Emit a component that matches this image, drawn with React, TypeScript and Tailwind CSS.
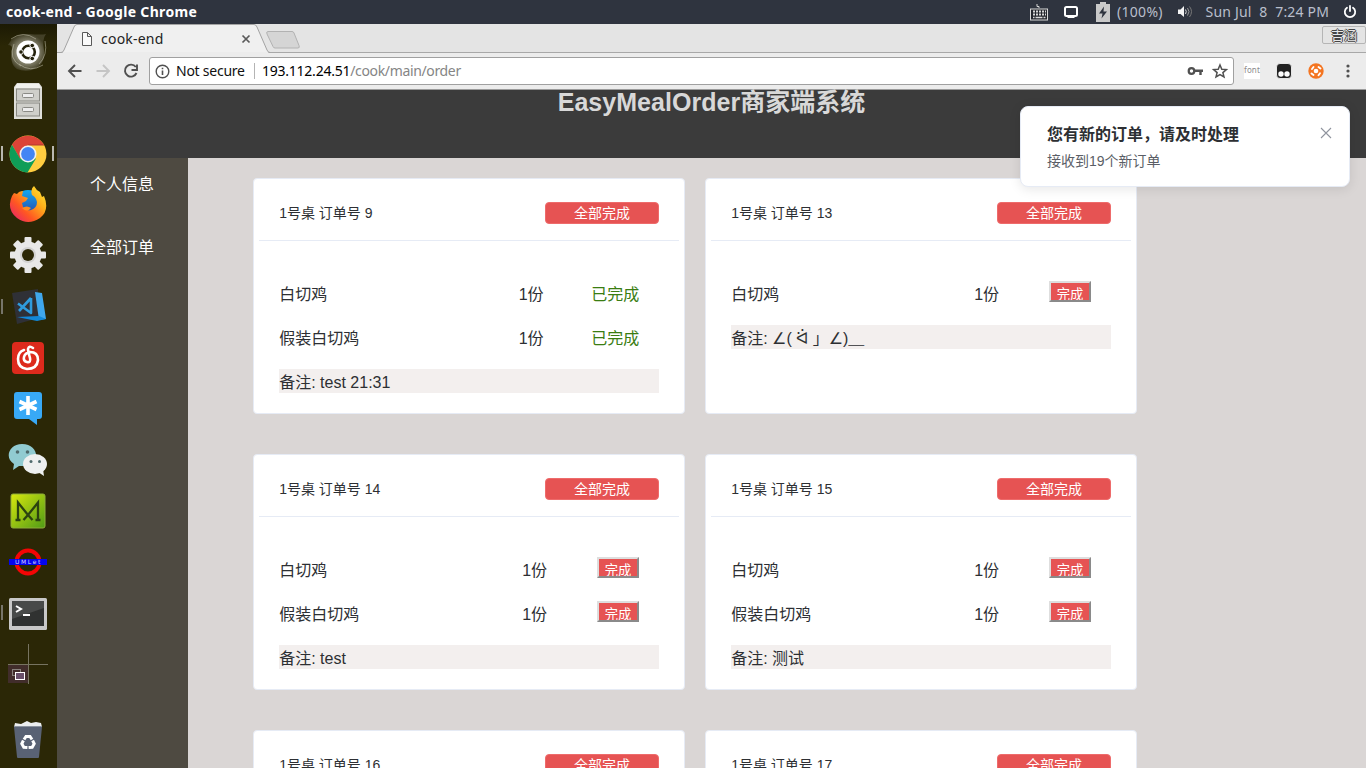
import React from "react";

type Item = { name: string; done?: boolean };
type Order = { no: number; items: Item[]; memo: React.ReactNode };

const two: Item[] = [{ name: "白切鸡" }, { name: "假装白切鸡" }];
const angle = <span className="font-['DejaVu_Sans']">∠</span>;
const orders: Order[] = [
  { no: 9, items: [{ name: "白切鸡", done: true }, { name: "假装白切鸡", done: true }], memo: "test 21:31" },
  { no: 13, items: [{ name: "白切鸡" }], memo: <>{angle}( ᐛ 」{angle})＿</> },
  { no: 14, items: two, memo: "test" },
  { no: 15, items: two, memo: "测试" },
  { no: 16, items: two, memo: "test" },
  { no: 17, items: two, memo: "test" },
];

function OrderCard({ order }: { order: Order }) {
  return (
    <div className="flex h-[236px] w-[432px] shrink-0 flex-col rounded-[4px] border border-[#e6ebf5] bg-white px-[5px] text-[#2d2f33]">
      <div className="flex h-[62px] shrink-0 items-start justify-between border-b border-[#e6ebf5] px-[20px] pt-[23px]">
        <span className="pl-[0.2px] text-[14px] leading-[22px]">1号桌 订单号 {order.no}</span>
        <button className="h-[22px] w-[114px] rounded-[4px] border border-[#ee6b6b] bg-[#e65353] text-center text-[14px] leading-[20px] text-white">
          全部完成
        </button>
      </div>
      <div className="flex flex-col gap-[20px] px-[20px] pt-[40px]">
        {order.items.map((it) => (
          <div key={it.name} className="flex h-[24px] items-start pl-[0.2px] text-[16px] leading-[28px]">
            <span className={it.done ? "w-[239.500px]" : "w-[243px]"}>{it.name}</span>
            <span className={it.done ? "w-[72.500px]" : "w-[74.800px]"}>1份</span>
            {it.done ? (
              <span className="text-[#3a7d12]">已完成</span>
            ) : (
              <button className="h-[21px] w-[42px] overflow-hidden border-2 border-t-[#dedede] border-r-[#8a8a8a] border-b-[#8a8a8a] border-l-[#dedede] bg-[#e65353] text-center text-[13.33px] leading-[23px] text-white">
                完成
              </button>
            )}
          </div>
        ))}
        <div className="h-[24px] bg-[#f3efee] pl-[0.2px] text-[16px] leading-[28px]">备注: {order.memo}</div>
      </div>
    </div>
  );
}

function SystemBar() {
  return (
    <div className="flex h-[24px] shrink-0 items-center justify-between bg-[#2f343f] font-['Noto_Sans']">
      <span className="pl-[6px] text-[14px] leading-[20px] font-bold tracking-[0.32px] text-white">cook-end - Google Chrome</span>
      <div className="flex items-center pr-[9px] text-[14px] leading-[20px] text-[#b9bfcc]">
        <svg width="20" height="20" viewBox="0 0 20 20" className="mr-[15px]" fill="none" stroke="#d8d8d8">
          <path d="M10 6V4.500H8V2" />
          <rect x="1.500" y="7" width="17" height="11" fill="#24262c" />
          <path d="M4 9.500h13M4 12.500h13" strokeWidth="2" strokeDasharray="2 1" />
          <path d="M4 15.500h1.500M6.500 15.500h7M14.500 15.500h2" strokeWidth="1.500" />
        </svg>
        <svg width="14" height="14" viewBox="0 0 14 14" className="mr-[18px]" fill="none" stroke="#fff" strokeWidth="2">
          <rect x="1" y="2" width="12" height="9" rx="1.500" />
          <path d="M3.500 12h7" />
        </svg>
        <svg width="14" height="20" viewBox="0 0 14 20" className="mr-[7px]">
          <path d="M4 0h6v2h4v18H0V2h4z" fill="#c9c9c9" />
          <path d="M8 4.500 3 11.500h3.500l-1 5 5.500-7H7.500z" fill="#2f343f" />
        </svg>
        <span className="w-[48px] whitespace-nowrap tracking-[0.3px]">(100%)</span>
        <svg width="16" height="14" viewBox="0 0 16 14" className="mr-[12.500px] ml-[12px]" fill="none">
          <path d="M1 4.500h2.500L7 1v11L3.500 9H1z" fill="#f4f4f4" />
          <path d="M8.500 4.500q1.500 2 0 4.500" stroke="#ddd" />
          <path d="M10.500 3q3 3.500 0 7.500" stroke="#999" />
          <path d="M12.500 1.500q4 5 0 10.500" stroke="#777" />
        </svg>
        <span className="w-[125.500px] whitespace-nowrap tracking-[0.2px]">Sun Jul&nbsp; 8&nbsp; 7:24 PM</span>
        <svg width="14" height="14" viewBox="0 0 14 14" className="ml-[12px]" fill="none" stroke="#fff" strokeWidth="1.800" strokeLinecap="round">
          <path d="M7 1v5M4 2.700a5.200 5.200 0 1 0 6 0" />
        </svg>
      </div>
    </div>
  );
}

function Slot({ children, mark, both }: { children: React.ReactNode; mark?: boolean; both?: boolean }) {
  return (
    <div className="relative flex h-[51px] w-full shrink-0 items-center justify-center pr-[2px]">
      {mark && <span className="absolute top-[18px] left-[1px] h-[15px] w-[2px] bg-[#77756a]" />}
      {both && <span className="absolute top-[18px] left-[1px] h-[15px] w-[2px] bg-[#b9b8b0]" />}
      {both && <span className="absolute top-[18px] right-[3px] h-[15px] w-[2px] bg-[#b9b8b0]" />}
      {children}
    </div>
  );
}

const teeth = [0, 45, 90, 135, 180, 225, 270, 315];

function Launcher() {
  return (
    <div className="flex w-[57px] shrink-0 flex-col bg-gradient-to-b from-[#1c1a04] via-[#2b2706] via-[3%] to-[#2b2706] pt-[2px]">
      <Slot>
        <svg width="40" height="40" viewBox="0 0 40 40">
          <defs>
            <radialGradient id="swirl">
              <stop offset="0.5" stopColor="#b9b7a8" />
              <stop offset="1" stopColor="#4d4a32" />
            </radialGradient>
          </defs>
          <path d="M0 13Q6 1 21 2q12 1 17 0-4 5-2 16 2 15-12 20-8 2-15-1Q1 32 4 16 4 13 0 13z" fill="url(#swirl)" opacity=".75" />
          <path d="M3 7q12-9 25 0M37 9q3 14-6 23M35 33q-13 8-24-1M6 12q-6 15 7 22" fill="none" stroke="#cecbb8" opacity=".5" />
          <circle cx="20" cy="20" r="11.500" fill="#fff" />
          <circle cx="20.500" cy="20" r="6.300" fill="none" stroke="#25220c" strokeWidth="2.600" />
          <g fill="#25220c" stroke="#fff" strokeWidth="1">
            <circle cx="13" cy="20" r="2.300" /><circle cx="24.200" cy="13.500" r="2.300" /><circle cx="24.200" cy="26.500" r="2.300" />
          </g>
        </svg>
      </Slot>
      <Slot>
        <svg width="30" height="38" viewBox="0 0 30 38" className="-mt-[3px]">
          <path d="M4 1h22l3 4v32H1V5z" fill="#deded9" />
          <path d="M4 2h22l2 4H2z" fill="#f2f2ef" />
          <rect x="3.500" y="7" width="23" height="12" fill="#cfcfca" stroke="#888882" />
          <rect x="3.500" y="21" width="23" height="13" fill="#cfcfca" stroke="#888882" />
          <rect x="9.500" y="11.500" width="11" height="4" rx="1" fill="#ededed" stroke="#8a8a85" />
          <rect x="9.500" y="25.500" width="11" height="4" rx="1" fill="#ededed" stroke="#8a8a85" />
        </svg>
      </Slot>
      <Slot both>
        <svg width="38" height="38" viewBox="0 0 38 38">
          <circle cx="19" cy="19" r="18.500" fill="#ffcd40" />
          <path d="M3 9.700A18.500 18.500 0 0 1 35 10H19L11 24z" fill="#dc4437" />
          <path d="M3 9.700A18.500 18.500 0 0 0 18.500 37.500L27 23.500H11z" fill="#0f9d58" />
          <path d="M19 10h16" stroke="#b33a2f" />
          <circle cx="19" cy="19" r="8.500" fill="#f1f1f1" /><circle cx="19" cy="19" r="6.900" fill="#4285f4" />
        </svg>
      </Slot>
      <Slot>
        <svg width="38" height="40" viewBox="0 0 38 40">
          <defs>
            <linearGradient id="fire" x1="1" y1="0" x2="0" y2="1"><stop stopColor="#fff13c" /><stop offset=".35" stopColor="#ffae1a" /><stop offset=".65" stopColor="#ff5722" /><stop offset="1" stopColor="#e3167c" /></linearGradient>
            <linearGradient id="globe" x1="0" y1="0" x2="0" y2="1"><stop stopColor="#14a9f2" /><stop offset="1" stopColor="#293b9f" /></linearGradient>
          </defs>
          <circle cx="19" cy="19" r="14" fill="url(#globe)" />
          <path d="M3 11l2-3 3 1q2-3 6-3l-1 5 6 2-2 3-4 2 1 4q3 4 8 3 6-2 6-8-1-5-5-7-2-6 2-9 2 4 6 6l2 5 2-1q6 14-4 22-12 8-23 0Q-3 24 3 11z" fill="url(#fire)" />
          <path d="M13 23q5-3 9 0-4 5-9 0z" fill="#ff8a1f" />
        </svg>
      </Slot>
      <Slot>
        <svg width="38" height="38" viewBox="0 0 38 38" fill="#e8e8e8" className="-mt-[2px]">
          {teeth.map((a) => <rect key={a} x="15.500" y="1" width="7" height="9" rx="1" transform={`rotate(${a} 19 19)`} />)}
          <circle cx="19" cy="19" r="13.500" />
          <circle cx="19" cy="19" r="8" fill="#d2d2d2" /><circle cx="19" cy="19" r="6" fill="#2b2706" />
        </svg>
      </Slot>
      <Slot mark>
        <svg width="38" height="38" viewBox="0 0 38 38">
          <path d="M3 5l26-4 1 29-22 6z" fill="#2f3036" />
          <path d="M26 4l7 1 4 26-7 1z" fill="#3fa7ec" />
          <path d="M8 29l22-1 7 3-9 2z" fill="#1288d8" />
          <path d="M22 10v15L9 15.500M22 10L10 23" fill="none" stroke="#2f9bdd" strokeWidth="2.600" strokeLinejoin="round" />
        </svg>
      </Slot>
      <Slot>
        <svg width="34" height="34" viewBox="0 0 34 34">
          <rect x="1" y="1" width="32" height="32" rx="4" fill="#dd2a1c" />
          <path d="M22 7q-4-3-5 1 0 2 2 9 1 5-3 4-4-1-3-5 1-4 6-5 8 0 8 8-1 9-11 9Q7 27 7 18q0-7 6-9" fill="none" stroke="#fff" strokeWidth="2.600" strokeLinecap="round" />
        </svg>
      </Slot>
      <Slot>
        <svg width="30" height="36" viewBox="0 0 30 36" className="mt-[1px]">
          <path d="M4 1h22q3 0 3 3v21q0 3-3 3h-2v6l-8-6H4q-3 0-3-3V4q0-3 3-3z" fill="#38a9f6" />
          <path d="M15 5v19M6.500 10.500l17 8M23.500 10.500l-17 8" stroke="#fff" strokeWidth="3.600" />
        </svg>
      </Slot>
      <Slot>
        <svg width="42" height="36" viewBox="0 0 42 36">
          <path d="M15 2c18 0 19 22 2 22l-5 0-6 4 1-6C-3 16 2 2 15 2z" fill="#91cbd1" />
          <ellipse cx="28" cy="22" rx="12" ry="10" fill="#eef0f0" /><path d="M31 30l6 4-1-7z" fill="#eef0f0" />
          <g fill="#4f6a6c"><circle cx="10.500" cy="10" r="1.800" /><circle cx="20.500" cy="10" r="1.800" /><circle cx="24" cy="19.500" r="1.500" /><circle cx="32.500" cy="19.500" r="1.500" /></g>
        </svg>
      </Slot>
      <Slot>
        <svg width="36" height="36" viewBox="0 0 36 36">
          <defs><linearGradient id="lime" x1="0" y1="0" x2="1" y2="1"><stop stopColor="#d9e80e" /><stop offset="1" stopColor="#4f9b16" /></linearGradient></defs>
          <rect x="1" y="1" width="34" height="34" rx="2" fill="url(#lime)" stroke="#8fae38" />
          <path d="M5.500 27h5M25.500 27h5M8 27V9.500L18 22 28 9.500V27M13.500 27L18 22l4.500 5" fill="none" stroke="#2c4310" strokeWidth="2.300" />
        </svg>
      </Slot>
      <Slot>
        <svg width="38" height="30" viewBox="0 0 38 30">
          <circle cx="19" cy="15" r="11.500" fill="none" stroke="#f40505" strokeWidth="4" />
          <rect y="12" width="38" height="6" fill="#0505ee" />
          <text x="19.500" y="17.200" fontSize="6" fontFamily="DejaVu Sans" textAnchor="middle" fill="#d2d2ff" letterSpacing="1.600">UMLet</text>
        </svg>
      </Slot>
      <Slot mark>
        <svg width="38" height="32" viewBox="0 0 38 32" className="mt-[2px]">
          <rect width="38" height="32" rx="1.500" fill="#c8c8c8" />
          <rect x="3" y="3" width="32" height="25" fill="#303231" /><path d="M3 3h32v7L3 21z" fill="#484a49" />
          <path d="M7 8l5 3-5 3M14 17h7" fill="none" stroke="#fff" strokeWidth="2" />
        </svg>
      </Slot>
      <Slot>
        <svg width="40" height="40" viewBox="0 0 40 40">
          <rect x="0" y="20" width="20" height="19" fill="#412d2b" />
          <path d="M20.500 0v40M0 20.500h40" stroke="#777461" />
          <rect x="4.500" y="25.500" width="8" height="6" fill="none" stroke="#88817c" />
          <rect x="7.500" y="28.500" width="9" height="7" fill="#69506a" stroke="#fff" />
        </svg>
      </Slot>
      <div className="mt-[32px] flex justify-center pr-[2px]">
        <svg width="32" height="38" viewBox="0 0 32 38">
          <path d="M2 6l1-4 6 1 6-3 4 2 5-1 5 1 1 4z" fill="#eceeef" />
          <path d="M2 6h28l-3 30q0 1-1 1H6q-1 0-1-1z" fill="#596274" />
          <path d="M2 5.500h28" stroke="#8b939f" />
          <g transform="translate(16 21.500)" fill="none" stroke="#fff" strokeWidth="3">
            <path d="M-4-3l2-3h4l2 3" /><path d="M-4-3l2-3h4l2 3" transform="rotate(120)" /><path d="M-4-3l2-3h4l2 3" transform="rotate(240)" />
          </g>
        </svg>
      </div>
    </div>
  );
}

function BrowserChrome() {
  return (
    <div className="shrink-0 font-['Noto_Sans']">
      <div className="relative flex h-[29px] border-b border-[#a8a8a8] bg-[#e4e4e4]">
        <svg width="250" height="29" viewBox="0 0 250 29" className="relative z-10 shrink-0">
          <path d="M0 28.500h4Q6 28.500 7 26L17 3q1-2.500 3-2.500h177q2 0 3 2.500l10 23q1 2.500 3 2.500" fill="#f0f0f0" stroke="#a3a3a3" />
          <path d="M6 28.500h205" stroke="#ececec" />
          <path d="M211 7.500h24q1.500 0 2 1.500l5 12.500q1 2.500-1 2.500h-23q-1.500 0-2-1.500l-6-12.500q-1-2.500 1-2.500z" fill="#d5d5d5" stroke="#b2b2b2" />
          <path d="M25.500 8.500h5l4 4v9h-9zM30.500 8.500v4h4" fill="#fafafa" stroke="#5a5a5a" />
          <path d="M185.500 11.500l7 7M192.500 11.500l-7 7" stroke="#5a5a5a" strokeWidth="1.700" />
        </svg>
        <span className="absolute top-[4px] left-[44px] z-20 text-[14px] leading-[21px] tracking-[0.22px] text-[#222]">cook-end</span>
        <span className="absolute top-[2px] right-0 h-[18px] w-[44px] rounded-[2px] border border-[#b5b5b5] text-center font-['Noto_Sans_CJK_SC'] text-[13px] leading-[16px] text-[#e8e8e8] [text-shadow:1px_0_0_#444,-1px_0_0_#444,0_1px_0_#444,0_-1px_0_#444]">吉涵</span>
      </div>
      <div className="flex h-[37px] items-center border-b border-[#9b9b9b] bg-[#ececec]">
        <svg width="92" height="36" viewBox="0 0 92 36" fill="none" stroke="#505050" strokeWidth="1.900" className="shrink-0">
          <path d="M24.500 18H12M18 12l-6 6 6 6" />
          <path d="M39.500 18H52M46 12l6 6-6 6" stroke="#c5c5c5" />
          <path d="M78.800 14A6 6 0 1 0 79.500 20M80 11.500V17H74.500" />
        </svg>
        <div className="flex h-[28px] w-[1085px] items-center rounded-[3px] border border-[#a0a0a0] bg-white text-[14px] leading-[20px]">
          <svg width="15" height="15" viewBox="0 0 15 15" className="ml-[5px]" fill="none" stroke="#505050" strokeWidth="1.400">
            <circle cx="7.500" cy="7.500" r="6.300" /><path d="M7.500 6.500v4.500M7.500 3.700v1.500" strokeWidth="1.600" />
          </svg>
          <span className="ml-[6px] w-[78px] whitespace-nowrap tracking-[-0.25px] text-[#111]">Not secure</span>
          <span className="h-[16px] w-px bg-[#b4b4b4]" />
          <span className="ml-[7px] flex-1 whitespace-nowrap tracking-[-0.35px] text-[#858585]"><span className="tracking-[-0.24px] text-black">193.112.24.51</span>/cook/main/order</span>
          <svg width="46" height="20" viewBox="0 0 46 20" fill="none" className="mr-[2px]">
            <circle cx="6.500" cy="10" r="2.800" stroke="#505050" strokeWidth="2.200" /><path d="M9.500 9.800h8.500M15.500 10v4" stroke="#505050" strokeWidth="2.400" />
            <path d="M35 4l1.800 4.200 4.600.4-3.500 3 1.100 4.400-4-2.400-4 2.400 1.100-4.400-3.500-3 4.600-.4z" stroke="#505050" strokeWidth="1.500" />
          </svg>
        </div>
        <span className="ml-[10px] h-[16px] w-[16px] bg-white text-center text-[8px] leading-[14px] tracking-[0.1px] text-[#8b8b8b]">font</span>
        <svg width="16" height="16" viewBox="0 0 16 16" className="ml-[16px]">
          <rect x=".5" y=".5" width="15" height="15" rx="3.500" fill="#222" stroke="#fff" strokeWidth=".8" />
          <circle cx="5" cy="11" r="2.700" fill="#fff" /><circle cx="11" cy="11" r="2.700" fill="#fff" />
        </svg>
        <svg width="16" height="16" viewBox="0 0 16 16" className="ml-[16px]">
          <circle cx="8" cy="8" r="7.700" fill="#f47521" />
          <g stroke="#fff" strokeWidth="1.900" strokeLinecap="round">
            <path d="M4 6l1.500-2M10.500 4l2 1.500M12 10.200l-1.500 2M5.500 12l-2-1.500" />
          </g>
          <circle cx="8" cy="8" r="2.300" fill="#fff" />
        </svg>
        <svg width="4" height="16" viewBox="0 0 4 16" className="ml-[22px]" fill="#505050"><circle cx="2" cy="3" r="1.600" /><circle cx="2" cy="8" r="1.600" /><circle cx="2" cy="13" r="1.600" /></svg>
      </div>
    </div>
  );
}

export default function App() {
  return (
    <div className="relative flex h-[768px] w-[1366px] flex-col overflow-hidden font-['Liberation_Sans','Noto_Sans_CJK_SC',sans-serif]">
      <SystemBar />
      <div className="flex h-[744px]">
        <Launcher />
        <div className="flex min-w-0 flex-1 flex-col">
          <BrowserChrome />
          <header className="h-[68px] shrink-0 bg-[#3b3b3b] text-center text-[25px] leading-[25px] font-bold tracking-[0.03px] text-[#d8d8d8]">EasyMealOrder商家端系统</header>
          <div className="flex min-h-0 flex-1">
            <nav className="flex w-[131px] shrink-0 flex-col items-center gap-[39px] bg-[#4e4a41] pt-[15px] pr-px text-[16px] leading-[24px] text-white">
              <span>个人信息</span>
              <span>全部订单</span>
            </nav>
            <main className="grid flex-1 grid-cols-[432px_432px] content-start gap-x-[20px] gap-y-[40px] overflow-hidden bg-[#dad6d5] pt-[20px] pl-[65px]">
              {orders.map((o) => <OrderCard key={o.no} order={o} />)}
            </main>
          </div>
        </div>
      </div>
      <div className="absolute top-[106px] left-[1020px] flex h-[81px] w-[330px] justify-between rounded-[8px] border border-[#e6ebf5] bg-white pt-[16px] pr-[17px] pl-[26px] shadow-[0_2px_12px_0_rgba(0,0,0,0.1)]">
        <div>
          <div className="text-[16px] leading-[24px] font-bold text-[#2d2f33]">您有新的订单，请及时处理</div>
          <div className="mt-[4px] text-[14px] leading-[21px] text-[#5a5e66]">接收到19个新订单</div>
        </div>
        <svg width="12" height="12" viewBox="0 0 12 12" className="mt-[4px]" stroke="#8f949e" strokeWidth="1.100"><path d="M1 1l10 10M11 1L1 11" /></svg>
      </div>
    </div>
  );
}
